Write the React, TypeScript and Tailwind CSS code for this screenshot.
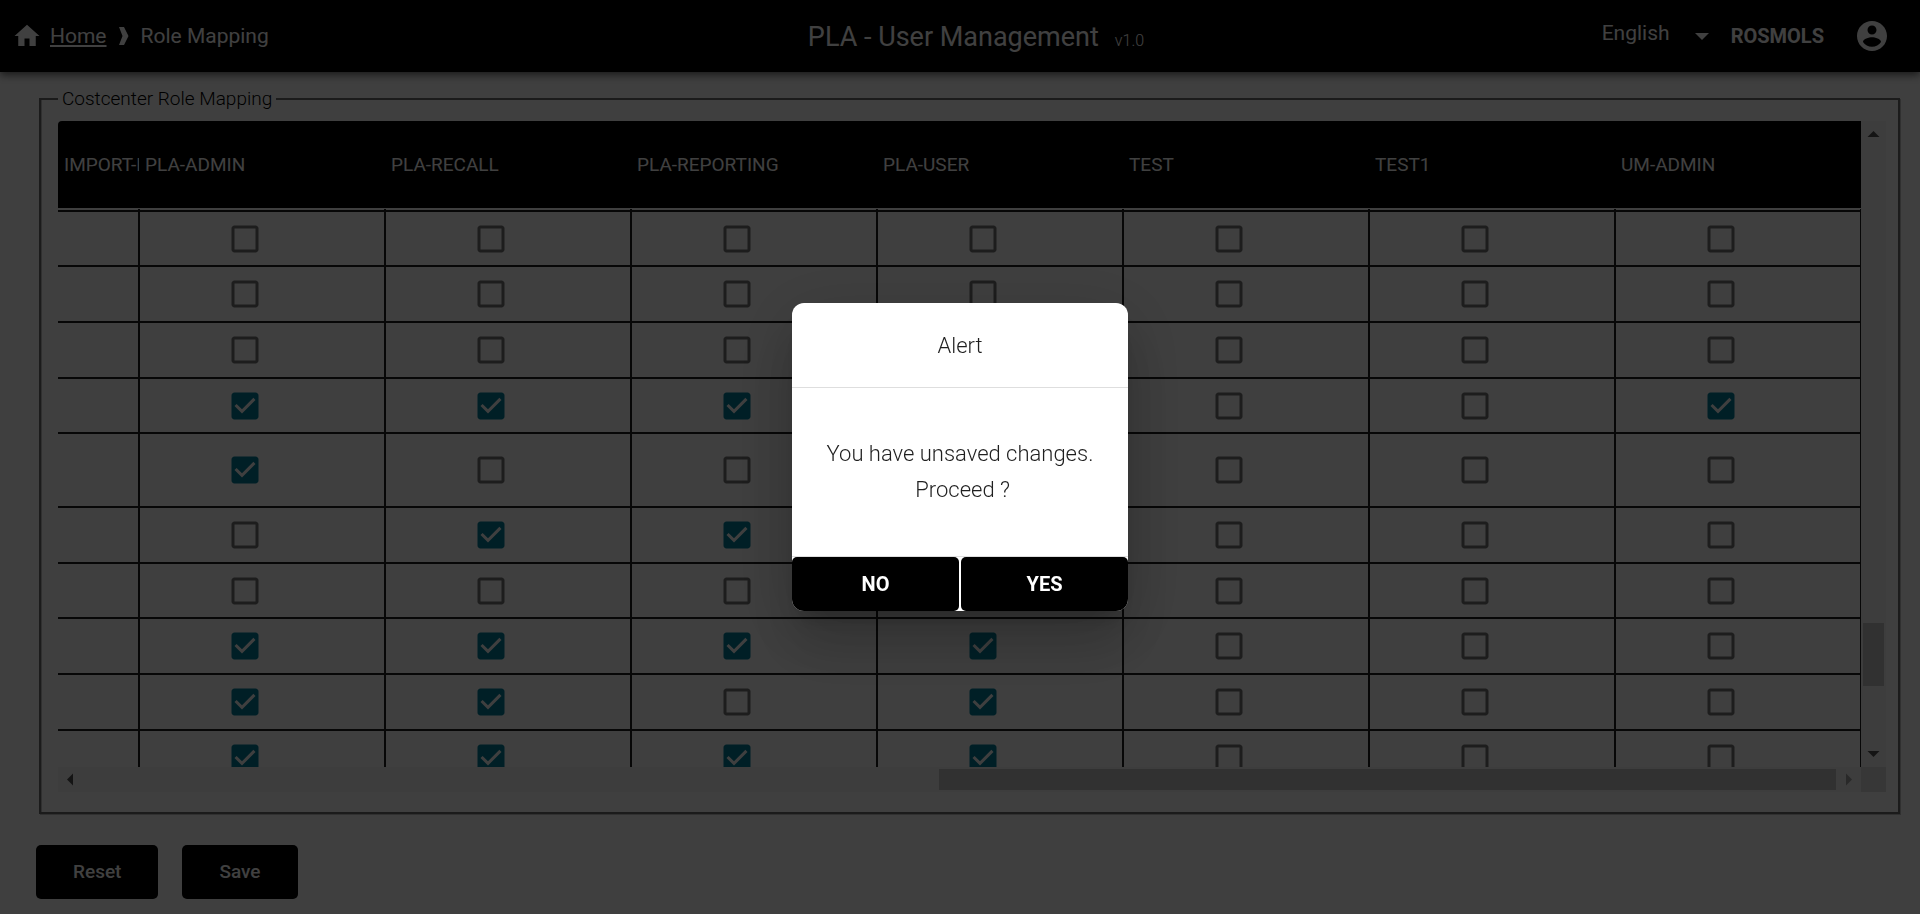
import React from "react";

const roles = ["PLA-ADMIN", "PLA-RECALL", "PLA-REPORTING", "PLA-USER", "TEST", "TEST1", "UM-ADMIN"];

const SHORT = "h-[55px]";
const NORMAL = "h-[56px]";
const TALL = "h-[74px]";

const rows: { height: string; checks: number[] }[] = [
  { height: SHORT, checks: [0, 0, 0, 0, 0, 0, 0] },
  { height: NORMAL, checks: [0, 0, 0, 0, 0, 0, 0] },
  { height: NORMAL, checks: [0, 0, 0, 0, 0, 0, 0] },
  { height: SHORT, checks: [1, 1, 1, 0, 0, 0, 1] },
  { height: TALL, checks: [1, 0, 0, 0, 0, 0, 0] },
  { height: NORMAL, checks: [0, 1, 1, 0, 0, 0, 0] },
  { height: SHORT, checks: [0, 0, 0, 0, 0, 0, 0] },
  { height: NORMAL, checks: [1, 1, 1, 1, 0, 0, 0] },
  { height: NORMAL, checks: [1, 1, 0, 1, 0, 0, 0] },
  { height: NORMAL, checks: [1, 1, 1, 1, 0, 0, 0] },
];

function Icon({ d, className }: { d: string; className: string }) {
  return (
    <svg viewBox="0 0 24 24" fill="currentColor" aria-hidden="true" className={className}>
      <path d={d} />
    </svg>
  );
}

const HOME = "M10 20v-6h4v6h5v-8h3L12 3 2 12h3v8z";
const ACCOUNT =
  "M12 2C6.48 2 2 6.48 2 12s4.48 10 10 10 10-4.48 10-10S17.52 2 12 2zm0 3c1.66 0 3 1.34 3 3s-1.34 3-3 3-3-1.34-3-3 1.34-3 3-3zm0 14.2c-2.5 0-4.71-1.28-6-3.22.03-1.99 4-3.08 6-3.08 1.99 0 5.97 1.09 6 3.08-1.29 1.94-3.5 3.22-6 3.22z";
const BOX = "M19 5v14H5V5h14m0-2H5c-1.1 0-2 .9-2 2v14c0 1.1.9 2 2 2h14c1.1 0 2-.9 2-2V5c0-1.1-.9-2-2-2z";
const BOX_CHECKED =
  "M19 3H5c-1.11 0-2 .9-2 2v14c0 1.1.89 2 2 2h14c1.11 0 2-.9 2-2V5c0-1.1-.89-2-2-2zm-9 14l-5-5 1.41-1.41L10 14.17l7.59-7.59L19 8l-9 9z";

function RoleCheck({ label, initial }: { label: string; initial: boolean }) {
  const [on, setOn] = React.useState(initial);
  return (
    <label className="inline-grid size-9 cursor-pointer align-middle">
      <input
        type="checkbox"
        aria-label={label}
        checked={on}
        onChange={() => setOn(!on)}
        className="col-start-1 row-start-1 size-9 opacity-0"
      />
      <Icon
        d={on ? BOX_CHECKED : BOX}
        className={
          on
            ? "pointer-events-none col-start-1 row-start-1 size-9 text-[#007d98]"
            : "pointer-events-none col-start-1 row-start-1 size-9 text-[#737373]"
        }
      />
    </label>
  );
}

function TopBar() {
  return (
    <header className="relative grid h-[72px] grid-cols-[1fr_auto_1fr] items-center bg-black text-white shadow-[0_3px_8px_rgba(0,0,0,0.6)]">
      <nav className="flex items-center pl-3 text-[21px]" aria-label="Breadcrumb">
        <Icon d={HOME} className="size-[30px]" />
        <a href="#home" className="ml-2 pt-[2px] underline underline-offset-2">
          Home
        </a>
        <svg viewBox="0 0 10 18" fill="currentColor" aria-hidden="true" className="ml-3 h-[18px] w-[10px]">
          <path d="M0 0h5l4.500 9L5 18H0l3.500-9z" />
        </svg>
        <span className="ml-3 pt-[2px]">Role Mapping</span>
      </nav>
      <h1 className="flex items-baseline gap-4 pt-[2px] pl-8 text-[27px]">
        PLA - User Management <small className="text-base font-light">v1.0</small>
      </h1>
      <div className="flex items-center justify-end pr-[30px]">
        <label className="flex items-center">
          <select
            aria-label="Language"
            className="w-[93px] cursor-pointer appearance-none bg-transparent pb-1 text-[21px] text-white outline-none"
          >
            <option>English</option>
          </select>
          <svg viewBox="0 0 14 7" fill="currentColor" aria-hidden="true" className="pointer-events-none h-[7px] w-[14px]">
            <path d="M0 0h14L7 7z" />
          </svg>
        </label>
        <span className="ml-[22px] text-xl font-bold">ROSMOLS</span>
        <button type="button" aria-label="Account" className="ml-[30px]">
          <Icon d={ACCOUNT} className="size-9" />
        </button>
      </div>
    </header>
  );
}

function RoleTable() {
  return (
    <table className="w-full table-fixed border-separate border-spacing-0 text-[19px]">
      <colgroup>
        <col className="w-[81px]" />
        {roles.map((r) => (
          <col key={r} />
        ))}
      </colgroup>
      <thead>
        <tr className="h-[88px] text-left text-white">
          <th className="overflow-hidden rounded-tl-[4px] border-b border-[#fafafa] bg-black p-0 pt-[2px] pl-[6px] font-normal whitespace-nowrap">
            IMPORT-E
          </th>
          {roles.map((r) => (
            <th key={r} className="border-b border-[#fafafa] bg-black p-0 pt-[2px] pl-[6px] font-normal">
              {r}
            </th>
          ))}
        </tr>
      </thead>
      <tbody>
        <tr className="h-[2px]">
          <td className="border-r border-b border-[#1c1c1c] p-0" />
          {roles.map((r) => (
            <td key={r} className="border-x border-b border-[#1c1c1c] p-0" />
          ))}
        </tr>
        {rows.map((row, i) => (
          <tr key={i} className={row.height}>
            <td className="border-y border-r border-[#1c1c1c] p-0" />
            {row.checks.map((c, j) => (
              <td key={j} className="border border-[#1c1c1c] p-0 pr-[34px] text-center leading-none">
                <RoleCheck label={roles[j] + ", row " + (i + 1)} initial={c === 1} />
              </td>
            ))}
          </tr>
        ))}
      </tbody>
    </table>
  );
}

function VerticalBar() {
  return (
    <div className="flex flex-col items-center bg-[#f1f1f1] text-[#505050]" aria-hidden="true">
      <svg viewBox="0 0 25 25" fill="currentColor" className="size-[25px]">
        <path d="M6.500 16h12l-6-6z" />
      </svg>
      <div className="grow-[477]" />
      <div className="h-[63px] w-[21px] bg-[#c1c1c1]" />
      <div className="grow-[56]" />
      <svg viewBox="0 0 25 25" fill="currentColor" className="size-[25px]">
        <path d="M6.500 9h12l-6 6z" />
      </svg>
    </div>
  );
}

function HorizontalBar() {
  return (
    <div className="flex h-[25px] items-center bg-[#f1f1f1] text-[#505050]" aria-hidden="true">
      <svg viewBox="0 0 25 25" fill="currentColor" className="size-[25px]">
        <path d="M15 6.500v12l-6-6z" />
      </svg>
      <div className="grow-[856]" />
      <div className="h-[21px] grow-[897] bg-[#c1c1c1]" />
      <svg viewBox="0 0 25 25" fill="currentColor" className="size-[25px] text-[#a3a3a3]">
        <path d="M10 6.500v12l6-6z" />
      </svg>
    </div>
  );
}

function AlertDialog() {
  return (
    <div className="fixed inset-0 flex items-center justify-center bg-black/75">
      <div
        role="alertdialog"
        aria-labelledby="alert-title"
        aria-describedby="alert-text"
        className="w-[336px] overflow-hidden rounded-xl bg-white text-[#1f1f1f] shadow-[0_16px_22px_-10px_rgba(0,0,0,0.2),0_36px_56px_4px_rgba(0,0,0,0.14),0_14px_68px_12px_rgba(0,0,0,0.12)]"
      >
        <h2 id="alert-title" className="flex h-[85px] items-center justify-center border-b border-[#dedede] text-[22px] font-light">
          Alert
        </h2>
        <p id="alert-text" className="border-b border-[#dedede] py-12 text-center text-[22px] leading-9 font-light">
          You have unsaved changes.
          <br />
          &nbsp;Proceed ?
        </p>
        <div className="grid grid-cols-2 gap-[2px] text-xl font-bold text-white">
          <button type="button" className="h-[54px] rounded-[5px] bg-black">
            NO
          </button>
          <button type="button" className="h-[54px] rounded-[5px] bg-black">
            YES
          </button>
        </div>
      </div>
    </div>
  );
}

export default function App() {
  return (
    <div className="min-h-screen bg-[#fafafa] font-[Roboto,'Liberation_Sans',sans-serif] text-black">
      <TopBar />
      <main className="pt-[14px] pr-5 pl-9">
        <fieldset className="ml-[3px] border-2 border-[#6c6c6c] pr-3 pb-5 pl-[17px] shadow-[1px_1px_0_#c0c0c0,inset_1px_0_0_#c0c0c0]">
          <legend className="px-1 text-[19px] leading-[26px] font-light">Costcenter Role Mapping</legend>
          <div className="mt-[9px] grid grid-cols-[1fr_25px]">
            <div className="h-[646px] overflow-hidden">
              <RoleTable />
            </div>
            <VerticalBar />
            <HorizontalBar />
            <div className="bg-[#dcdcdc]" />
          </div>
        </fieldset>
        <div className="mt-[31px] flex gap-6 text-[19px] font-medium text-white">
          <button type="button" className="h-[54px] rounded-[5px] bg-black px-[37px]">
            Reset
          </button>
          <button type="button" className="h-[54px] rounded-[5px] bg-black px-[37px]">
            Save
          </button>
        </div>
      </main>
      <AlertDialog />
    </div>
  );
}
